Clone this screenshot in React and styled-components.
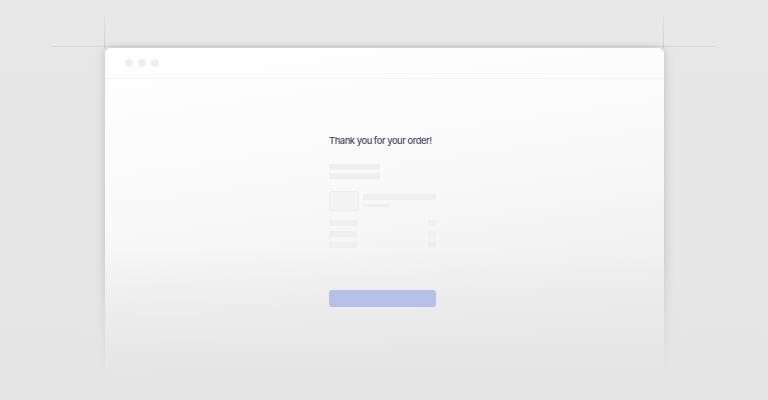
import React from 'react';
import styled, { createGlobalStyle } from 'styled-components';

const GlobalStyle = createGlobalStyle`
  body {
    margin: 0;
    font-family: Inter, "Liberation Sans", sans-serif;
    background: #e7e7e7;
  }
`;

const Stage = styled.div`
  position: relative;
  width: 768px;
  height: 400px;
  overflow: hidden;
  background: linear-gradient(180deg, #e8e8e8 0%, #e5e5e5 100%);
  padding-top: 48px;
  box-sizing: border-box;
`;

const HGuide = styled.div`
  position: absolute;
  left: 52px;
  top: 46px;
  width: 664px;
  height: 1px;
  background: #d7d7d7;
`;

const VGuide = styled.div`
  position: absolute;
  left: ${p => p.$x}px;
  top: 16px;
  width: 1px;
  height: 32px;
  background: linear-gradient(180deg, #e2e2e2, #cdcdcd);
`;

const Window = styled.div`
  position: relative;
  margin-left: 105px;
  width: 559px;
  height: 352px;
  border-radius: 6px 6px 0 0;
  background: linear-gradient(172deg, #ffffff 0%, #f9f9f9 40%, #ebebeb 85%, #e6e6e6 100%);
  box-shadow: -3px 0 8px rgba(0, 0, 0, 0.09), 3px 0 8px rgba(0, 0, 0, 0.09);
`;

const Fade = styled.div`
  position: absolute;
  left: -20px;
  right: -20px;
  bottom: 0;
  height: 150px;
  background: linear-gradient(180deg, rgba(230, 230, 230, 0) 0%, rgba(230, 230, 230, 0.6) 55%, #e5e5e5 85%);
  pointer-events: none;
`;

const TitleBar = styled.div`
  height: 30px;
  display: flex;
  align-items: center;
  gap: 5px;
  padding: 0 0 0 20px;
  border-bottom: 1px solid #f3f3f3;
  box-sizing: content-box;
`;

const Dot = styled.span`
  width: 8px;
  height: 8px;
  border-radius: 50%;
  background: #efefef;
`;

const Content = styled.div`
  position: relative;
  z-index: 1;
  margin-left: 224px;
  width: 107px;
  padding-top: 55px;
  display: flex;
  flex-direction: column;
`;

const Title = styled.h1`
  margin: 0 0 16px;
  font-size: 9.3px;
  font-weight: 500;
  letter-spacing: -0.42px;
  line-height: 14px;
  color: #4d4d69;
  white-space: nowrap;
`;

const Bar = styled.div`
  width: ${p => p.$w}px;
  height: ${p => p.$h || 6}px;
  background: #efefef;
  border-radius: 1px;
  margin-bottom: ${p => p.$mb || 0}px;
`;

const Item = styled.div`
  display: flex;
  gap: 4px;
  margin-top: 12px;
  margin-bottom: 9px;
`;

const Thumb = styled.div`
  width: 29px;
  height: 18px;
  border: 1px solid #ededed;
  border-radius: 2px;
  background: #f4f4f4;
`;

const ItemText = styled.div`
  flex: 1;
  padding-top: 3px;
  display: flex;
  flex-direction: column;
  gap: 4px;
`;

const Row = styled.div`
  display: flex;
  justify-content: space-between;
  margin-bottom: 5px;
`;

const Button = styled.div`
  margin-top: 37px;
  height: 17px;
  border-radius: 3px;
  background: #b6c1ea;
`;

export default function App() {
  return (
    <>
      <GlobalStyle />
      <Stage>
        <HGuide />
        <VGuide $x={104} />
        <VGuide $x={663} />
        <Window>
          <TitleBar>
            <Dot />
            <Dot />
            <Dot />
          </TitleBar>
          <Content>
            <Title>Thank you for your order!</Title>
            <Bar $w={51} $mb={3} />
            <Bar $w={51} />
            <Item>
              <Thumb />
              <ItemText>
                <Bar $w={73} />
                <Bar $w={28} $h={3} />
              </ItemText>
            </Item>
            {[0, 1, 2].map(i => (
              <Row key={i}>
                <Bar $w={28} />
                <Bar $w={8} />
              </Row>
            ))}
            <Button />
          </Content>
          <Fade />
        </Window>
      </Stage>
    </>
  );
}
